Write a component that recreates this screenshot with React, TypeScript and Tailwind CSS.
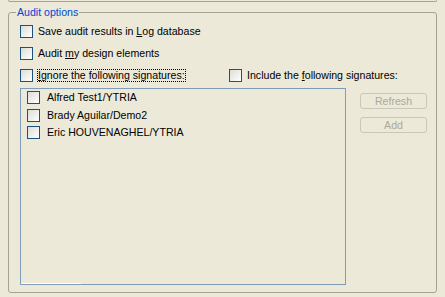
import React from 'react';

const font = "font-['Liberation_Sans',Arial,sans-serif] text-[10.6px] leading-[13px]";

function Box() {
  return (
    <span className="block h-[13px] w-[13px] shrink-0 border border-[#1c5180] bg-linear-to-br from-[#dcdcd7] to-white" />
  );
}

function Check({ children, gap = 'ml-[5px]' }: { children: React.ReactNode; gap?: string }) {
  return (
    <div className="flex h-[13px] items-center">
      <Box />
      <span className={`${gap} whitespace-nowrap text-black`}>{children}</span>
    </div>
  );
}

const names = ['Alfred Test1/YTRIA', 'Brady Aguilar/Demo2', 'Eric HOUVENAGHEL/YTRIA'];

export default function App() {
  return (
    <div className={`h-[297px] w-[445px] overflow-hidden bg-[#ece9d8] ${font}`}>
      {/* bottom edge of the panel above */}
      <div className="mx-[8px] h-[2px] rounded-b-[3px] border-x border-b border-[#a3a296]" />

      <div className="relative mx-[8px] mt-[10px] h-[281px] rounded-[3px] border border-[#a3a296] pl-[11px] pt-[12px]">
        <span className="absolute -top-[7px] left-[7px] bg-[#ece9d8] px-[1px] text-[#0046d5]">
          Audit options
        </span>

        <div className="flex flex-col gap-[9px]">
          <Check>
            Save audit results in <u>L</u>og database
          </Check>
          <Check>
            Audit <u>m</u>y design elements
          </Check>
          <div className="flex h-[13px] items-center">
            <div className="flex w-[209px] items-center">
              <Box />
              <span className="ml-[4px] whitespace-nowrap border border-dotted border-black leading-[11px]">
                <u>I</u>gnore the following signatures:
              </span>
            </div>
            <Check>
              Include the <u>f</u>ollowing signatures:
            </Check>
          </div>
        </div>

        <div className="mt-[6px] flex">
          <div className="flex h-[197px] w-[326px] flex-col border border-[#7f9db9] pl-[6px] pt-[2px]">
            <div className="flex flex-col gap-[4.5px]">
              {names.map((n) => (
                <Check key={n} gap="ml-[7px]">
                  {n}
                </Check>
              ))}
            </div>
            <div className="mt-auto -ml-[6px] h-[1px] w-[60px] bg-white" />
          </div>

          <div className="ml-[14px] mt-[5px] flex flex-col gap-[8px]">
            <div className="flex h-[16px] w-[67px] items-center justify-center rounded-[3px] border border-[#c9c7ba] text-[#aca899]">
              Refresh
            </div>
            <div className="flex h-[16px] w-[67px] items-center justify-center rounded-[3px] border border-[#c9c7ba] text-[#aca899]">
              Add
            </div>
          </div>
        </div>
      </div>
    </div>
  );
}
